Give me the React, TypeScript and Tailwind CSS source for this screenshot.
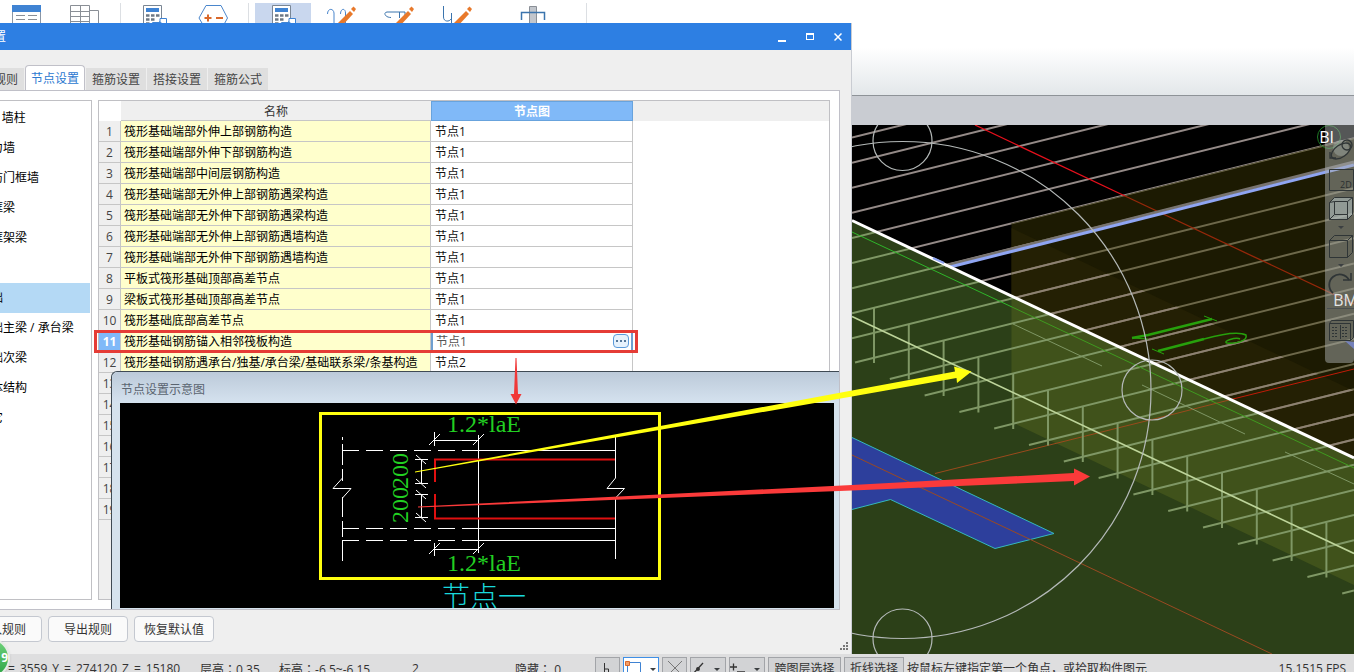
import type { ReactNode } from 'react'

const font = "font-['Open_Sans','Noto_Sans_CJK_SC',sans-serif]"

const treeItems = [
  '柱 / 墙柱',
  '剪力墙',
  '人防门框墙',
  '非框梁',
  '非框架梁',
  '',
  '基础',
  '基础主梁 / 承台梁',
  '基础次梁',
  '主体结构',
  '其它',
]

const rows = [
  { name: '筏形基础端部外伸上部钢筋构造', node: '节点1' },
  { name: '筏形基础端部外伸下部钢筋构造', node: '节点1' },
  { name: '筏形基础端部中间层钢筋构造', node: '节点1' },
  { name: '筏形基础端部无外伸上部钢筋遇梁构造', node: '节点1' },
  { name: '筏形基础端部无外伸下部钢筋遇梁构造', node: '节点1' },
  { name: '筏形基础端部无外伸上部钢筋遇墙构造', node: '节点1' },
  { name: '筏形基础端部无外伸下部钢筋遇墙构造', node: '节点1' },
  { name: '平板式筏形基础顶部高差节点', node: '节点1' },
  { name: '梁板式筏形基础顶部高差节点', node: '节点1' },
  { name: '筏形基础底部高差节点', node: '节点1' },
  { name: '筏形基础钢筋锚入相邻筏板构造', node: '节点1' },
  { name: '筏形基础钢筋遇承台/独基/承台梁/基础联系梁/条基构造', node: '节点2' },
]

// rows 13-19 sit behind the preview window
const coveredRows = [13, 14, 15, 16, 17, 18, 19]

function RibbonButton({ label, active, className = '', children }: { label: string; active?: boolean; className?: string; children: ReactNode }) {
  return (
    <button aria-label={label} className={`flex h-16 w-14 justify-center pt-px ${active ? 'bg-[#c9d7ee]' : ''} ${className}`}>
      <svg width="36" height="30" viewBox="0 0 36 30" fill="none">
        {children}
      </svg>
    </button>
  )
}

function Pencil() {
  return (
    <>
      <path d="M14 20 L27 7 L30 10 L17 24 L12 25 Z" fill="#e8792b" />
      <path d="M28 5 L30.500 2.500 L33 5 L31 8 Z" fill="#e8792b" />
    </>
  )
}

function Calculator() {
  return (
    <>
      <path d="M7.500 1.500 H25.500 V27 H7.500 Z" fill="#fff" stroke="#7a8694" />
      <rect x="10" y="4" width="13" height="4" fill="#3f83d3" />
      <path d="M10 11.500h3.500M15 11.500h3.500M20 11.500h3.500M10 15.500h3.500M15 15.500h3.500M10 19.500h3.500" stroke="#6d7884" strokeWidth="2.500" />
      <path d="M16.500 18.500 H24 V14.500 H30.500 V27 H16.500 Z" fill="#fff" stroke="#3f83d3" />
      <path d="M23 17l3 2-3 2z" fill="#3f83d3" />
    </>
  )
}

function Ribbon() {
  return (
    <header className="flex h-24 shrink-0 items-start border-b border-[#8e9398] bg-linear-to-b from-white from-50% to-[#e3e7ea] pt-[3px]">
      <div className="flex w-[121px] border-r border-[#dcdfe3]">
        <RibbonButton label="表格">
          <path d="M2.500 1.500h28v27h-28z" fill="#fff" stroke="#8a96a5" />
          <rect x="2" y="1" width="29" height="7" fill="#3f83d3" />
          <path d="M6 11.500h9M18 11.500h9M6 15.500h9M18 15.500h9M6 19.500h9M18 19.500h9" stroke="#8a8f96" />
        </RibbonButton>
        <RibbonButton label="明细">
          <path d="M4.500 1.500h19v25h-19zM14.500 1.500v25M4.500 7.500h19M4.500 12.500h19M4.500 17.500h19M23.500 6.500h9v22" stroke="#8a8f96" />
        </RibbonButton>
      </div>
      <div className="flex w-32 gap-[3px] border-r border-[#dcdfe3] pl-[5px]">
        <RibbonButton label="汇总计算">
          <Calculator />
        </RibbonButton>
        <RibbonButton label="增减">
          <path d="M4 14 L11 1.500 H26 L32.500 14 L26 26 H11 Z" fill="#fff" stroke="#4a86cc" />
          <path d="M9.500 14h7M13 10.500v7M21 14h7" stroke="#d9682b" strokeWidth="2" />
        </RibbonButton>
      </div>
      <div className="flex w-[338px] gap-0.5 border-r border-[#dcdfe3] pl-1.5">
        <RibbonButton label="查看计算" active>
          <Calculator />
        </RibbonButton>
        <RibbonButton label="编辑弯钩">
          <path d="M4.500 10c0-6 6-6 6.500-1v16M17.500 10c0-6 5-6 5-1v16" stroke="#4a86cc" />
          <Pencil />
        </RibbonButton>
        <RibbonButton label="编辑钢筋">
          <path d="M10 13.500c-6 0-8-5-4-5.500h18v6M18.500 8v6" stroke="#3b74ad" />
          <Pencil />
        </RibbonButton>
        <RibbonButton label="编辑端头">
          <path d="M4.500 2v11c0 5 6 5 7.500 2M12.500 9v16M20.500 18v8" stroke="#3b74ad" />
          <Pencil />
        </RibbonButton>
        <RibbonButton label="梁柱节点" className="ml-4.5">
          <path d="M14.500 2.500h7v26h-7z" fill="#c2c6cc" stroke="#8a8f96" />
          <path d="M6.500 16V8.500h23V16" stroke="#3b74ad" strokeWidth="1.500" />
        </RibbonButton>
      </div>
    </header>
  )
}

const bars = Array.from({ length: 24 }, (_, i) => i - 9)

function Bars({ color, clip }: { color: string; clip: string }) {
  return (
    <g stroke={color} strokeWidth="2" clipPath={`url(#${clip})`}>
      {bars.map((n) => {
        const x = n < 0 ? 852 : 855 + 34.8 * n
        const y = 363.5 + 25.1 * n - (x - 852) * 0.249
        return <line key={n} x1={x} y1={n < 0 ? y : 362.5 + 16.5 * n} x2={1354} y2={(n < 0 ? y : 362.5 + 16.5 * n) - (1354 - x) * 0.249} />
      })}
    </g>
  )
}

function Scene() {
  return (
    <svg className="h-full w-full" viewBox="0 125 1354 529" preserveAspectRatio="xMaxYMin slice" fill="none">
      <defs>
        <clipPath id="dark">
          <path d="M852 125H1354V138L1011.500 223.500V295L852 220Z" />
        </clipPath>
        <clipPath id="olive">
          <path d="M1011.500 223.500L1354 138V458L1011.500 295.500Z" />
        </clipPath>
        <clipPath id="olive-low">
          <path d="M1011.500 228L1354 391V458L1011.500 295.500Z" />
        </clipPath>
        <clipPath id="slab">
          <path d="M852 220L1354 458V654H852Z" />
        </clipPath>
      </defs>
      <rect x="0" y="125" width="1354" height="529" fill="#000" />
      <path d="M1011.500 223.500L1354 138V458L1011.500 295.500Z" fill="#1c1a02" />
      <path d="M1011.500 228L1354 391V458L1011.500 295.500Z" fill="#242004" />
      <path d="M852 220L1354 458V654H852Z" fill="#2c4018" />
      <path d="M1011.500 296L1354 458V585L1011.500 422Z" fill="#40521b" />

      <path d="M852 437.500L1054 533.500L995 548.500L890.500 499.500L852 509.500" fill="#2d3f9c" stroke="#35b8bd" />
      <path d="M852 455L1272 654" stroke="#9a4a22" />
      <path d="M935 473.500L1178 413L1233 399" stroke="#9a4a1c" />
      <path d="M1233 399L1354 369" stroke="#c01c08" />

      <Bars color="#948a87" clip="dark" />
      <Bars color="#6d684a" clip="olive" />
      <Bars color="#8d8172" clip="olive-low" />
      <Bars color="#7f9765" clip="slab" />
      <g stroke="#7f9765" strokeWidth="2">
        {bars.slice(9).map((n) => (
          <line key={n} x1={874 + 34.8 * n} y1={308 + 16.5 * n} x2={874 + 34.8 * n} y2={363 + 16.5 * n} />
        ))}
      </g>
      <path d="M1013 324L1102 366M1142 385L1245 434M1285 452L1354 484" stroke="#7f9765" />

      <path d="M975 125L1125 196" stroke="#e8101c" strokeWidth="1.3" />
      <path d="M1125 196L1354 304" stroke="#96280a" strokeWidth="1.3" />
      <path d="M945 266L1354 162" stroke="#77736f" strokeWidth="3" />
      <path d="M950 267L1354 165" stroke="#8fa5f2" strokeWidth="3" />

      <path d="M852 232L1012 307" stroke="#2fb52a" />
      <path d="M1012 307L1354 468" stroke="#3f9a1f" />
      <path d="M852 316.500L1354 553.500" stroke="#bdd49a" strokeWidth="1.7" />
      <path d="M852 220.500L1354 458" stroke="#fff" strokeWidth="3" />
      <path d="M933 258L944 263" stroke="#8fa5f2" strokeWidth="2" />

      <g stroke="#27a00c">
        <path d="M1132 338L1148 335L1212 319" strokeWidth="2.500" />
        <path d="M1132 338L1148 339M1204 316L1217 321M1152 349L1164 354" />
        <path d="M1158 351L1204 339" strokeWidth="2.500" />
        <path d="M1204 339C1222 334 1238 331 1246 335C1248 341 1235 344 1227 343C1222 341 1236 337 1240 339" strokeWidth="1.500" />
      </g>
      <circle cx="1329" cy="137" r="11.500" stroke="#1f7a24" />
      <path d="M1345 341L1354 349V342Z" fill="#3f55c8" />

      <g stroke="#b4b9b8" strokeWidth="1.200">
        <circle cx="902.500" cy="390" r="248.500" />
        <circle cx="902.500" cy="141" r="29.500" />
        <circle cx="1152" cy="390" r="30" />
        <circle cx="902.500" cy="638.500" r="29.500" />
      </g>
    </svg>
  )
}

function NavButton({ label, children }: { label: string; children: ReactNode }) {
  return (
    <button aria-label={label} className="block h-7 w-7">
      <svg width="28" height="28" viewBox="0 0 28 28" fill="none" stroke="#2f3536">
        {children}
      </svg>
    </button>
  )
}

function Caret() {
  return (
    <svg className="mx-auto" width="10" height="10" viewBox="0 0 10 10">
      <path d="M2 4h6l-3 3z" fill="#3b3f41" />
    </svg>
  )
}

function ViewTools() {
  return (
    <aside className="absolute top-0 right-0 h-[238px] w-[29px] rounded-b bg-[#a9adad]/50 pt-[13px] pl-0.5">
      <NavButton label="动态观察">
        <circle cx="14" cy="10" r="8" fill="#b6c4bf" fillOpacity="0.35" stroke="none" />
        <circle cx="20" cy="7" r="5" strokeWidth="1.300" />
        <ellipse cx="14" cy="13" rx="11" ry="6" transform="rotate(-35 14 13)" strokeWidth="1.300" />
        <path d="M3 14v6h6" strokeWidth="1.300" />
      </NavButton>
      <NavButton label="二维">
        <path d="M2.500 3.500h24v21h-24z" />
        <text x="13" y="22" fontSize="9" fill="#2a2f30" stroke="none" fontFamily="Open Sans">
          2D
        </text>
      </NavButton>
      <NavButton label="三维视图">
        <path d="M2.500 8.500l5-5h18v17l-5 5h-18z" fill="#b8c6c8" fillOpacity="0.55" />
        <path d="M7.500 7.500h13v13h-13zM2.500 8.500l5-1M20.500 7.500l5-4M2.500 25.500l5-5M20.500 20.500v5" />
      </NavButton>
      <Caret />
      <NavButton label="显示样式">
        <path d="M2.500 8.500l5-5h18v17l-5 5h-18zM2.500 8.500h18v17M20.500 8.500l5-5" />
      </NavButton>
      <Caret />
      <NavButton label="旋转">
        <path d="M6 23A10.500 10.500 0 1 1 22 10" strokeWidth="1.800" />
        <path d="M24 3v7h-8" strokeWidth="1.500" />
      </NavButton>
      <hr className="mt-2.5 w-7 border-[#4a4f50]" />
      <div className="pt-2">
        <NavButton label="显示设置">
          <path d="M2.500 6.500h21v17h-21zM2.500 6.500l2-3h22v17l-3 3" />
          <path d="M5 10.500h6M15 10.500h6M5 13.500h6M15 13.500h6M5 16.500h6M15 16.500h6M5 19.500h6M15 19.500h6" strokeDasharray="2 1" />
          <path d="M13.500 8v14" />
        </NavButton>
      </div>
    </aside>
  )
}

function NodeDrawing() {
  return (
    <svg className="block h-full w-full" viewBox="120 403 714 205" preserveAspectRatio="xMinYMin slice" fill="none">
      <rect x="120" y="403" width="714" height="205" fill="#000" />
      <g stroke="#fff" shapeRendering="crispEdges">
        <path d="M342.500 437v3M342.500 444v21M342.500 469v12M342.500 497v20M342.500 521v16M342.500 541v20" />
        <path d="M342 450.500h136M342 528.500h136M342 540.500h136" strokeDasharray="17 7" />
        <path d="M478 450.500h137M478 528.500h137M478 540.500h137M478.500 435v118M615.500 437v41M615.500 497v62" />
        <path d="M435 440.500h44M434.500 432v14M435 549.500h44M434.500 543v13M421.500 459v24M421.500 494v23" />
        <path d="M415 459.500h13M415 483.500h13M415 494.500h13M415 517.500h13" />
      </g>
      <g stroke="#fff">
        <path d="M429 445l11-11M473 445l11-11M429 554l11-11M473 554l11-11" />
        <path d="M416 455l10 9M416 479l10 9M416 490l10 9M416 513l10 9" />
        <path d="M342.500 478L333 488.500H351L342.500 498M615.500 478L607 488.500H624.500L615.500 498" />
      </g>
      <path d="M435 482V459.500H615M435 494V518.500H615" stroke="#e01010" strokeWidth="2" />
      <g fill="#22d022" fontFamily="Liberation Serif" fontSize="24">
        <text x="447" y="432">1.2*laE</text>
        <text x="447" y="571">1.2*laE</text>
        <text transform="translate(408 489) rotate(-90)">200</text>
        <text transform="translate(408 523) rotate(-90)">200</text>
      </g>
      <text x="442" y="607" fill="#19d8dc" fontFamily="Noto Sans CJK SC" fontWeight="300" fontSize="28">
        节点一
      </text>
    </svg>
  )
}

function NodeTable() {
  return (
    <div className="min-w-0 flex-1 overflow-hidden border border-[#c0c0c4] bg-white">
      <table className="w-full table-fixed border-separate border-spacing-0">
        <colgroup>
          <col className="w-[22px]" />
          <col className="w-[310px]" />
          <col className="w-[202px]" />
          <col />
        </colgroup>
        <thead>
          <tr className="h-5 bg-[#efefef]">
            <th className="bg-white p-0" aria-label="序号"></th>
            <th className="border-b border-[#c6c6c6] p-0 pt-0.5 font-normal text-[#333]">名称</th>
            <th className="border border-[#68a3dd] bg-[#80b9f8] p-0 pt-px font-bold text-white">节点图</th>
            <th className="p-0"></th>
          </tr>
        </thead>
        <tbody>
          {rows.map((row, i) => {
            const selected = i === 10
            return (
              <tr key={row.name} className="h-[21px]">
                <th className={`border-r border-b border-[#c6c6c6] p-0 pt-0.5 ${selected ? 'bg-[#80b9f8] font-bold text-white' : 'bg-[#efefef] font-normal text-[#444]'}`}>
                  {i + 1}
                </th>
                <td className="border-r border-b border-[#c6c6c6] bg-[#ffffcc] p-0 pt-0.5 pl-[3px] whitespace-nowrap text-black">{row.name}</td>
                {selected ? (
                  <td className="border-x-2 border-b border-x-[#6f9fd0] border-b-[#c6c6c6] p-0">
                    <div className="flex h-5 items-center pr-0.5 pl-[3px]">
                      <input aria-label="节点图" defaultValue={row.node} className="min-w-0 flex-1 pt-0.5 text-[#555] outline-none" />
                      <button aria-label="选择节点" className="flex h-3.5 w-4 items-center justify-center gap-0.5 rounded-sm border border-[#5b9bdb] bg-[#e6f2fd]">
                        <i className="h-0.5 w-0.5 bg-[#54779a]"></i>
                        <i className="h-0.5 w-0.5 bg-[#54779a]"></i>
                        <i className="h-0.5 w-0.5 bg-[#54779a]"></i>
                      </button>
                    </div>
                  </td>
                ) : (
                  <td className="border-r border-b border-[#c6c6c6] p-0 pt-0.5 pl-1 text-[#111]">{row.node}</td>
                )}
                <td className="p-0"></td>
              </tr>
            )
          })}
          {coveredRows.map((n) => (
            <tr key={n} className="h-[21px]">
              <th className="border-r border-b border-[#c6c6c6] bg-[#efefef] p-0 pt-0.5 font-normal text-[#444]">{n}</th>
            </tr>
          ))}
          <tr className="h-24">
            <th className="bg-[#efefef] p-0" aria-label="空白"></th>
          </tr>
        </tbody>
      </table>
    </div>
  )
}

function PreviewWindow() {
  return (
    <section className="absolute right-0 bottom-0 left-[111px] flex h-[238px] flex-col rounded-tl-md border-t border-l border-[#3f4a54] bg-[#d5e2ed]">
      <h2 className="h-[31px] shrink-0 rounded-tl-md bg-linear-to-b from-[#bccad9] to-[#d5e2ef] pl-[9px] leading-9 text-[#5a6470]">节点设置示意图</h2>
      <div className="mr-[5px] mb-px ml-2 min-h-0 flex-1">
        <NodeDrawing />
      </div>
    </section>
  )
}

const idleTab = 'h-[22px] bg-[#dfdfdf] px-1.5 pt-0.5 text-[#444]'
const footButton = 'h-[26px] w-20 rounded-sm border border-[#c4c8d0] bg-[#fafafa] pt-0.5 text-[#333]'

function SettingsDialog() {
  return (
    <div role="dialog" aria-label="设置" className="absolute top-[23px] bottom-[18px] left-0 flex w-[852px] flex-col overflow-hidden border-r border-[#c9ccd2] bg-[#efefef]">
      <div className="flex h-[27px] shrink-0 items-center justify-between bg-[#2d7fe3] pr-1.5">
        <h1 className="-ml-1.5 text-white">置</h1>
        <div className="flex gap-3.5">
          <button aria-label="最小化" className="flex h-3 w-3.5 items-end justify-center pb-px">
            <i className="h-0.5 w-2 bg-white"></i>
          </button>
          <button aria-label="最大化" className="flex h-3 w-3.5 items-center justify-center">
            <i className="h-[7px] w-2 border border-t-2 border-white"></i>
          </button>
          <button aria-label="关闭" className="flex h-3 w-3.5 items-center justify-center">
            <svg width="8" height="8" viewBox="0 0 8 8" stroke="#fff" strokeWidth="1.500">
              <path d="M0.500 0.500l7 7M7.500 0.500l-7 7" />
            </svg>
          </button>
        </div>
      </div>

      <nav className="-ml-3 flex h-10 shrink-0 items-end gap-px">
        <button className={idleTab}>规则</button>
        <button className="relative top-px h-[26px] rounded-t-sm border border-b-0 border-[#c0c0c8] bg-white px-[5px] text-[#2b78d0]">节点设置</button>
        <button className={idleTab}>箍筋设置</button>
        <button className={idleTab}>搭接设置</button>
        <button className={idleTab}>箍筋公式</button>
      </nav>

      <div className="relative mr-[11px] flex min-h-0 flex-1 gap-1.5 border border-l-0 border-[#c0c0c8] bg-white pt-[9px] pr-[9px] pb-[9px]">
        <ul className="w-[92px] shrink-0 overflow-hidden border border-l-0 border-[#c0c0c4] pt-0.5">
          {treeItems.map((item, i) => (
            <li key={i} className={`h-[30px] leading-[30px] whitespace-nowrap text-black ${i === 6 ? 'mr-px bg-[#b4d9f5]' : ''}`}>
              <span className="-ml-[21px]">{item}</span>
            </li>
          ))}
        </ul>
        <NodeTable />
        <PreviewWindow />
      </div>

      <footer className="flex h-11 shrink-0 items-start gap-1.5 pt-1.5">
        <button className={`${footButton} -ml-[38px]`}>导入规则</button>
        <button className={footButton}>导出规则</button>
        <button className={footButton}>恢复默认值</button>
        <svg className="mt-auto mr-[3px] mb-1 ml-auto" width="8" height="8" viewBox="0 0 8 8" fill="#777">
          <path d="M6 0h2v2H6zM3 3h2v2H3zM6 3h2v2H6zM0 6h2v2H0zM3 6h2v2H3zM6 6h2v2H6z" />
        </svg>
      </footer>
    </div>
  )
}

const tool = 'flex h-6 shrink-0 items-center justify-center border border-[#a2a4a8] bg-[#d2d3d5]'

function Colon() {
  return <span className="font-['Noto_Sans_CJK_TC',sans-serif]">：</span>
}

function StatusBar() {
  return (
    <footer className="flex h-[18px] shrink-0 items-start bg-[#dededf] pt-[3px] leading-6 whitespace-nowrap text-[#333]">
      <div className="flex w-[200px] shrink-0 gap-[5px] pl-2">
        <span>=</span>
        <span>3559</span>
        <span>Y</span>
        <span>=</span>
        <span>274120</span>
        <span>Z</span>
        <span>=</span>
        <span>15180</span>
      </div>
      <span className="w-[79px] shrink-0">
        层高
        <Colon />
        0.35
      </span>
      <span className="w-[133px] shrink-0">
        标高
        <Colon />
        -6.5~-6.15
      </span>
      <span className="w-[103px] shrink-0">2</span>
      <span className="w-20 shrink-0">
        隐藏
        <Colon /> 0
      </span>
      <div className="flex shrink-0 gap-[3px]">
        <button aria-label="正交" className={`${tool} w-[25px]`}>
          <svg width="12" height="18" viewBox="0 0 12 18" fill="none" stroke="#333">
            <path d="M2.500 3v11h8M2.500 9h4v5" />
          </svg>
        </button>
        <button aria-label="对象捕捉" className="flex h-6 w-9 shrink-0 items-center justify-center gap-1.5 border border-[#3f8fe6] bg-white">
          <svg width="18" height="20" viewBox="0 0 18 20" fill="none">
            <path d="M3.500 3.500h13v14h-13z" stroke="#3f83d3" />
            <path d="M1.500 2.500h4v4h-4z" fill="#f3a06a" stroke="#d9682b" />
          </svg>
          <Caret />
        </button>
        <button aria-label="交点" className={`${tool} w-[25px]`}>
          <svg width="16" height="18" viewBox="0 0 16 18" stroke="#777">
            <path d="M1 1l14 14M15 1l-14 14" />
          </svg>
        </button>
        <button aria-label="中点" className={`${tool} w-9 gap-1`}>
          <svg width="14" height="18" viewBox="0 0 14 18" stroke="#333" strokeWidth="1.300">
            <path d="M1 15L12 3" />
            <circle cx="7" cy="9" r="1.300" fill="#333" />
          </svg>
          <Caret />
        </button>
        <button aria-label="偏移" className={`${tool} w-9 gap-1`}>
          <svg width="16" height="18" viewBox="0 0 16 18" stroke="#333" strokeWidth="1.300">
            <path d="M0 7h7M3.500 3.500v7M7 12h8" />
          </svg>
          <Caret />
        </button>
        <button className={`${tool} w-[73px]`}>跨图层选择</button>
        <button className={`${tool} w-[60px]`}>折线选择</button>
      </div>
      <span className="ml-[3px]">按鼠标左键指定第一个角点，或拾取构件图元</span>
      <span className="mr-2 ml-auto">15.1515 FPS</span>
    </footer>
  )
}

function Markup() {
  return (
    <svg className="pointer-events-none absolute inset-0 h-full w-full" fill="none">
      <rect x="95.500" y="331.500" width="541" height="20" stroke="#e53c36" strokeWidth="3" />
      <rect x="320.500" y="413.500" width="339" height="165" stroke="#ffff10" strokeWidth="3" />
      <path d="M415 471.500L852 390.500L955 371.500L954 366.500L971.500 371.500L957 383L956.500 378L852 396.500L415 472.500Z" fill="#ffff10" />
      <path d="M418 506.500L852 485L1074 473V468.500L1090 476.500L1074 485.500V481L852 490.500L418 507.500Z" fill="#fb3a3a" />
      <path d="M515.500 358h1L518 394h3.500L516 404.500L510.500 394H514Z" fill="#f03838" />
    </svg>
  )
}

export default function App() {
  return (
    <div className={`relative flex h-screen flex-col overflow-hidden bg-[#c9ccd2] text-xs ${font}`}>
      <Ribbon />
      <main className="relative mt-[29px] min-h-0 flex-1 overflow-hidden">
        <Scene />
        <ViewTools />
        <span className="absolute top-0 right-5 text-base text-white">BI</span>
        <span className="absolute top-[163px] -right-1 text-base text-[#e4e6e6]">BM</span>
      </main>
      <StatusBar />
      <SettingsDialog />
      <Markup />
      <div className="absolute -bottom-1.5 -left-[30px] flex h-10 w-10 items-center justify-end rounded-full border-2 border-[#e6ebe6] bg-linear-to-b from-[#6fd37c] to-[#2aa544] font-bold text-white shadow">9</div>
    </div>
  )
}
